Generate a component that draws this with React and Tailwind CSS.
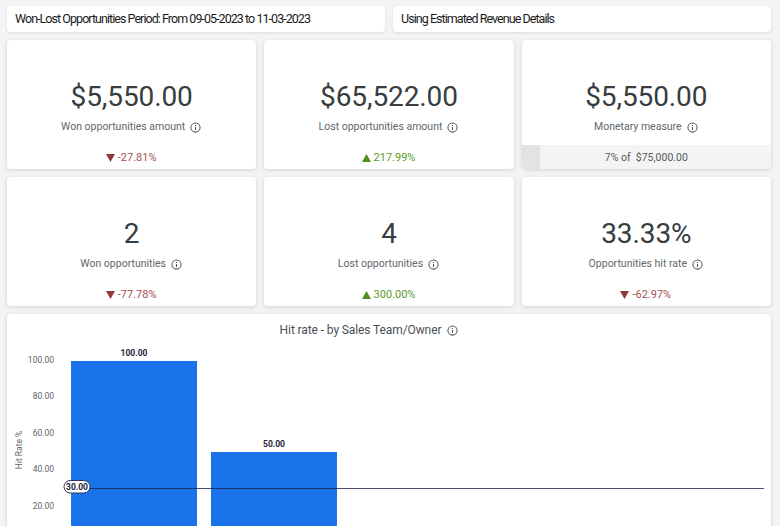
const Info = () => (
  <svg width="11" height="11" viewBox="0 0 11 11" fill="none" stroke="#55595d" strokeWidth="1.05" className="shrink-0">
    <circle cx="5.5" cy="5.5" r="4.6" />
    <path d="M5.5 5v3" />
    <path d="M5.5 3v1" />
  </svg>
);

const Delta = ({ up, value }) => (
  <div className={`flex items-center justify-center gap-[3px] pr-[1px] text-[11px] leading-[14px] ${up ? "text-[#5b9a2c]" : "text-[#a5514f]"}`}>
    <svg width="9" height="8" viewBox="0 0 9 8" className={up ? "fill-[#4e8f1f]" : "fill-[#8f3a38]"}>
      <path d={up ? "M4.5 0 9 8H0z" : "M0 0h9L4.5 8z"} />
    </svg>
    <span>{value}</span>
  </div>
);

const Card = ({ value, label, up, delta, progress }) => (
  <div className="flex h-[129px] flex-col overflow-hidden rounded-[4px] bg-white shadow-[0_1px_4px_rgba(60,64,67,0.18)]">
    <div className="pt-[39px] text-center text-[28px] leading-[36px] tracking-[-0.1px] text-[#363d42]">{value}</div>
    <div className="mt-[4px] flex items-center justify-center gap-[5px] pr-[1px] text-[10.5px] leading-[16px] text-[#62676b]">
      <span>{label}</span>
      <Info />
    </div>
    {progress ? (
      <div className="mt-auto flex h-[24px] bg-[#f4f4f4]">
        <div className="w-[18px] bg-[#e1e3e5]" />
        <div className="flex-1 whitespace-pre pr-[18px] text-center text-[10.5px] leading-[25px] text-[#54595d]">{progress}</div>
      </div>
    ) : (
      <div className="mt-auto pb-[4px]">
        <Delta up={up} value={delta} />
      </div>
    )}
  </div>
);

const Header = ({ children }) => (
  <div className="flex h-[26px] items-center rounded-[4px] bg-white pl-2 text-[12.5px] tracking-[-0.95px] text-[#1b1b1b] shadow-[0_1px_3px_rgba(60,64,67,0.15)]">
    {children}
  </div>
);

const ticks = [
  ["100.00", 360],
  ["80.00", 396],
  ["60.00", 433],
  ["40.00", 469],
  ["20.00", 506],
];

const Chart = () => (
  <svg width="764" height="182" viewBox="7 344 764 182" className="block" style={{ fontFamily: "Roboto, sans-serif" }}>
    {ticks.map(([t, y]) => (
      <text key={t} x="54" y={y + 3} textAnchor="end" fontSize="8.5" fill="#5f6368">{t}</text>
    ))}
    <text transform="translate(22 450) rotate(-90)" textAnchor="middle" fontSize="8.5" fill="#5f6368">Hit Rate %</text>
    <rect x="71" y="361" width="126" height="170" fill="#1a73e8" />
    <rect x="211" y="452" width="126" height="80" fill="#1a73e8" />
    <text x="134" y="356" textAnchor="middle" fontSize="8.5" fontWeight="700" fill="#1d1d3a">100.00</text>
    <text x="274" y="447" textAnchor="middle" fontSize="8.5" fontWeight="700" fill="#1d1d3a">50.00</text>
    <line x1="90" y1="488.5" x2="764" y2="488.5" stroke="#1c2350" strokeOpacity="0.8" strokeWidth="1" />
    <rect x="64" y="480.5" width="26" height="12.5" rx="6.2" fill="#fff" stroke="#2c3260" strokeWidth="1" />
    <text x="77" y="490" textAnchor="middle" fontSize="8.5" fontWeight="700" fill="#1d1d3a">30.00</text>
  </svg>
);

export default function App() {
  return (
    <div className="h-[526px] w-[780px] overflow-hidden bg-[#f3f4f6] pl-[7px] pr-[9px] pt-[6px] font-['Roboto',sans-serif]">
      <div className="grid grid-cols-2 gap-[8px]">
        <Header>Won-Lost Opportunities Period: From 09-05-2023 to 11-03-2023</Header>
        <Header>Using Estimated Revenue Details</Header>
      </div>
      <div className="mt-[8px] grid grid-cols-3 gap-[8px]">
        <Card value="$5,550.00" label="Won opportunities amount" delta="-27.81%" />
        <Card value="$65,522.00" label="Lost opportunities amount" up delta="217.99%" />
        <Card value="$5,550.00" label="Monetary measure" progress={"7% of  $75,000.00"} />
        <Card value="2" label="Won opportunities" delta="-77.78%" />
        <Card value="4" label="Lost opportunities" up delta="300.00%" />
        <Card value="33.33%" label="Opportunities hit rate" delta="-62.97%" />
      </div>
      <div className="mt-[8px] h-[240px] overflow-hidden rounded-[4px] bg-white shadow-[0_1px_4px_rgba(60,64,67,0.18)]">
        <div className="flex h-[30px] items-start justify-center gap-[6px] pr-[40px] pt-[8px] text-[12px] leading-[16px] tracking-[-0.1px] text-[#4a4f54]">
          <span>Hit rate - by Sales Team/Owner</span>
          <span className="mt-[3px]"><Info /></span>
        </div>
        <Chart />
      </div>
    </div>
  );
}
